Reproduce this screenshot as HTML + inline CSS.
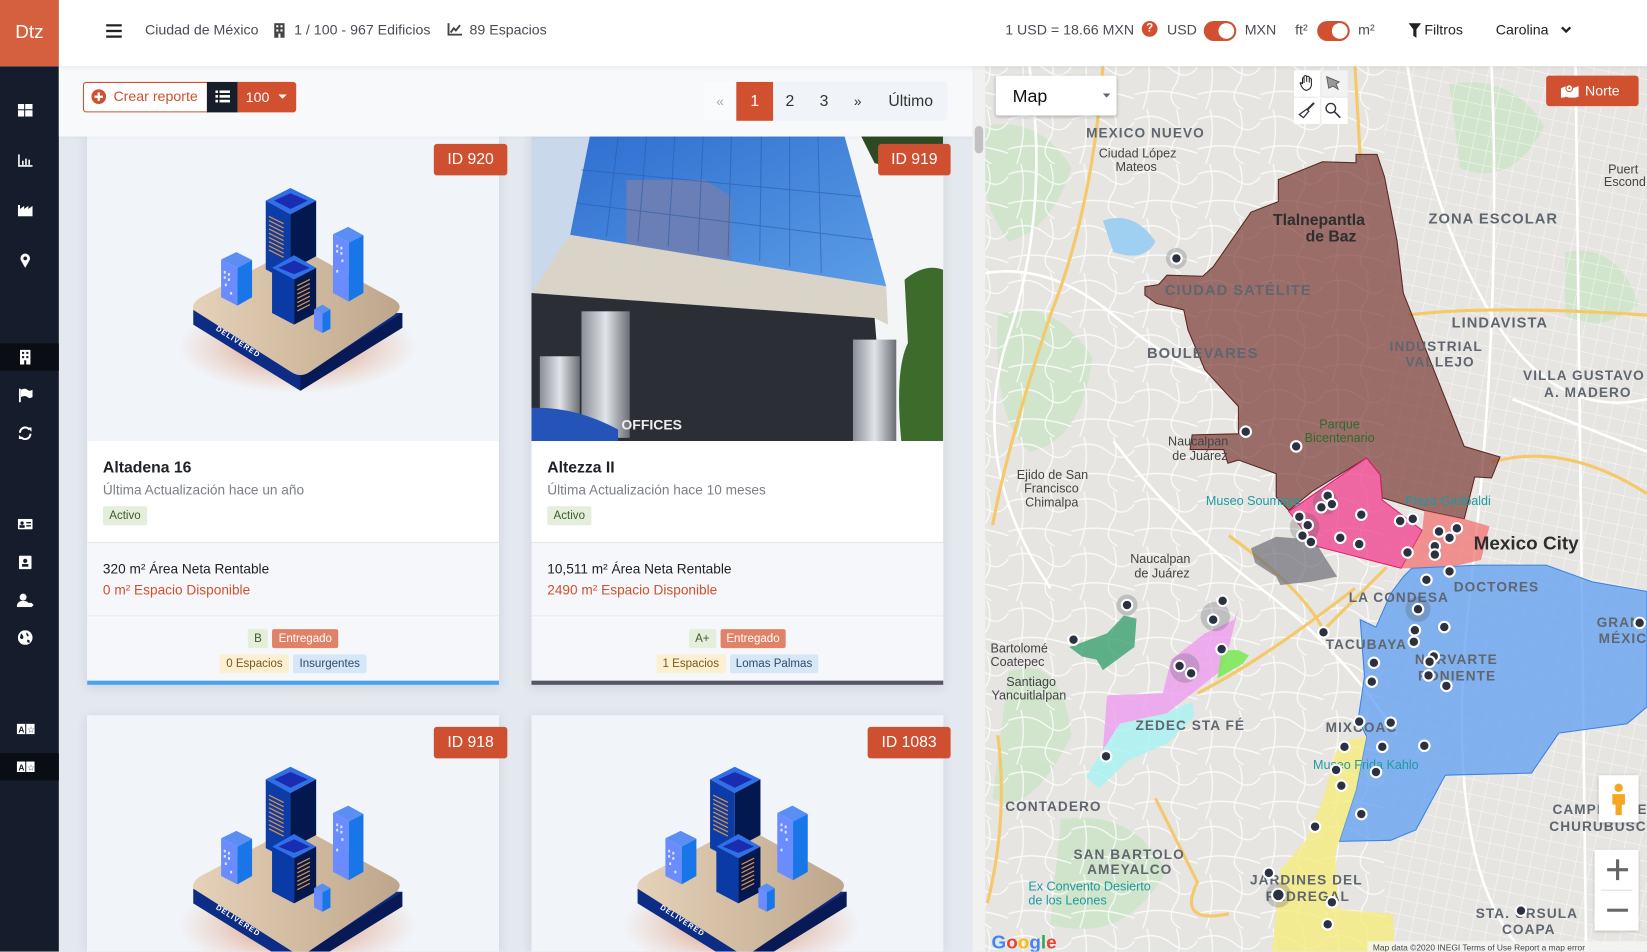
<!DOCTYPE html>
<html><head><meta charset="utf-8">
<style>
*{box-sizing:border-box;margin:0;padding:0}
html,body{width:1647px;height:951px;overflow:hidden;background:#e6eaf1;font-family:"Liberation Sans",sans-serif}
#wrap{position:absolute;left:0;top:0;width:1568px;height:906px;transform:scale(1.05038);transform-origin:0 0;overflow:hidden;background:#e4e8ef}
.abs{position:absolute}
#hdr{left:0;top:0;width:1568px;height:63px;background:#fff;box-shadow:0 1px 4px rgba(0,0,0,.08);z-index:5}
#logo{left:0;top:0;width:56px;height:63px;background:#d5603f;color:#fff;font-size:18px;line-height:60px;text-align:center}
.ht{font-size:13.5px;color:#4a4d55;top:21px;white-space:nowrap}
#side{left:0;top:63px;width:56px;height:843px;background:#151c2b}
#tool{left:56px;top:63px;width:870px;height:67px;background:#f8f9fb;z-index:3;box-shadow:0 1px 3px rgba(0,0,0,.05)}
.card{position:absolute;width:392px;background:#fff;box-shadow:0 2px 10px rgba(40,50,80,.12)}
.img{position:absolute;left:0;top:0;width:392px;height:290px;background:#f1f5fa;overflow:hidden}
.idb{position:absolute;height:30px;background:#cf5030;color:#fff;font-size:15px;line-height:30px;text-align:center;border-radius:3px;z-index:2}
.ttl{position:absolute;left:15px;font-size:15px;color:#1e2128;font-weight:bold}
.sub{position:absolute;left:15px;font-size:13px;color:#7b7f88}
.bdg{display:inline-block;font-size:11px;padding:0 6px;height:18px;line-height:18px;border-radius:2px;margin:0 2px}
.sec2{position:absolute;left:0;width:392px;height:71px;background:#f5f7fa;border-top:1px solid #e4e7ec;border-bottom:1px solid #e4e7ec}
.dot{fill:#2b3140;stroke:#fff;stroke-width:2}
.halo{fill:rgba(80,80,90,.25)}
.ml{font-family:"Liberation Sans",sans-serif;fill:#5f6670;font-weight:bold;letter-spacing:1px}
</style></head><body>
<svg width="0" height="0" style="position:absolute">
<defs>
<radialGradient id="glow" cx="50%" cy="50%" r="50%"><stop offset="0" stop-color="#c0582a" stop-opacity=".7"/><stop offset="1" stop-color="#e38a5a" stop-opacity="0"/></radialGradient>
<linearGradient id="plat" x1="0" y1="0" x2="1" y2="0"><stop offset="0" stop-color="#e5d2b8"/><stop offset="1" stop-color="#bea68c"/></linearGradient>
<g id="city">
<ellipse cx="200" cy="200" rx="115" ry="45" fill="url(#glow)"/>
<path d="M101,165 L101,179 L203,242 L300,182 L300,168 Z" fill="#0d2c86"/>
<path d="M203,228 L300,168 L300,182 L203,242 Z" fill="#081a55"/>
<path d="M101,165 Q99,158 110,152 L190,110 Q200,105 210,110 L292,155 Q303,162 292,170 L212,224 Q203,230 194,224 Z" fill="url(#plat)"/>
<text x="122" y="184" transform="rotate(33 122 184)" font-size="7" fill="#fff" font-weight="bold" letter-spacing="1">DELIVERED</text>
<path d="M127.5,117 L142,110 L157,117.5 L143,125 Z" fill="#5b8ef2"/><path d="M127.5,117 L143,125 L143,161 L127.5,153 Z" fill="#6a8cff"/><path d="M143,125 L157,117.5 L157,153 L143,161 Z" fill="#1976e8"/>
<g fill="#dce6ff"><rect x="130" y="128" width="2" height="2.5"/><rect x="134" y="130" width="2" height="2.5"/><rect x="130" y="133" width="2" height="2.5"/><rect x="134" y="135" width="2" height="2.5"/><rect x="131" y="140" width="2" height="2.5"/><rect x="136" y="148" width="2" height="2.5"/></g>
<path d="M234,93 L248.5,86 L263,94 L249,101 Z" fill="#5b8ef2"/><path d="M234,93 L249,101 L249,157 L234,149 Z" fill="#6a8cff"/><path d="M249,101 L263,94 L263,149 L249,157 Z" fill="#1976e8"/>
<g fill="#dce6ff"><rect x="237" y="103" width="2" height="2.5"/><rect x="241" y="105" width="2" height="2.5"/><rect x="237" y="108" width="2" height="2.5"/><rect x="241" y="110" width="2" height="2.5"/><rect x="242" y="117" width="2" height="2.5"/><rect x="237" y="127" width="2" height="2.5"/></g>
<path d="M170,61 L193.5,49 L218,61 L193.5,74 Z" fill="#2f6fe8"/><path d="M178,61 L193.5,54 L210,61 L193.5,69 Z" fill="#1a2db0"/><path d="M170,61 L193.5,74 L193.5,139 L170,126.5 Z" fill="#0c3ca8"/><path d="M193.5,74 L218,61 L218,114 L193.5,127 Z" fill="#03184f"/>
<g stroke="#d89040" stroke-width="1.2"><path d="M173,76 l14,7 M173,80 l14,7 M173,84 l14,7 M173,88 l14,7 M173,92 l14,7 M173,96 l14,7 M173,100 l14,7 M173,104 l14,7 M173,108 l14,7"/></g>
<path d="M176,125 L197,113 L218,125 L197,136 Z" fill="#2f6fe8"/><path d="M182,125 L197,118 L212,125 L197,131 Z" fill="#1a2db0"/><path d="M176,125 L197,136 L197,179 L176,168 Z" fill="#0a3aa6"/><path d="M197,136 L218,125 L218,168 L197,179 Z" fill="#03184f"/>
<g stroke="#d89040" stroke-width="1.2"><path d="M200,142 l12,-6 M200,146 l12,-6 M200,150 l12,-6 M200,154 l12,-6 M200,158 l12,-6 M200,162 l12,-6 M200,166 l12,-6"/></g>
<path d="M216,164.5 L224,160 L231.6,164.5 L224,168.6 Z" fill="#5b8ef2"/><path d="M216,164.5 L224,168.6 L224,187 L216,183 Z" fill="#6a8cff"/><path d="M224,168.6 L231.6,164.5 L231.6,183 L224,187 Z" fill="#1976e8"/>
</g>
<pattern id="roads" width="60" height="52" patternUnits="userSpaceOnUse"><path d="M0,10 Q20,2 35,14 T60,12 M12,0 Q18,25 8,52 M40,0 Q46,20 38,30 Q30,45 44,52 M0,38 Q25,30 60,42" stroke="#fff" stroke-width="1.2" fill="none" opacity=".85"/></pattern>
<pattern id="grid" width="14" height="14" patternUnits="userSpaceOnUse" patternTransform="rotate(12)"><path d="M0,0 H14 M0,0 V14" stroke="#fff" stroke-width="1.1" fill="none" opacity=".85"/></pattern>
</defs></svg>
<div id="wrap">
<div id="hdr" class="abs">
<div id="logo" class="abs">Dtz</div>
<svg class="abs" style="left:101px;top:23px" width="15" height="13"><rect y="0" width="15" height="2.2" fill="#222"/><rect y="5.4" width="15" height="2.2" fill="#222"/><rect y="10.8" width="15" height="2.2" fill="#222"/></svg>
<div class="abs ht" style="left:138px">Ciudad de México</div>
<svg class="abs" style="left:261px;top:22px" width="10" height="14"><rect width="10" height="14" fill="#444"/><g fill="#fff"><rect x="2" y="2" width="2" height="2"/><rect x="6" y="2" width="2" height="2"/><rect x="2" y="6" width="2" height="2"/><rect x="6" y="6" width="2" height="2"/><rect x="4" y="10" width="2" height="4"/></g></svg>
<div class="abs ht" style="left:280px">1 / 100 - 967 Edificios</div>
<svg class="abs" style="left:426px;top:22px" width="14" height="12"><path d="M1,0 V11 H14" stroke="#444" stroke-width="1.8" fill="none"/><path d="M3,9 L6,5 L8,7 L12,2" stroke="#444" stroke-width="1.8" fill="none"/></svg>
<div class="abs ht" style="left:447px">89 Espacios</div>
<div class="abs ht" style="left:957px">1 USD = 18.66 MXN</div>
<div class="abs" style="left:1087px;top:20px;width:15px;height:15px;border-radius:50%;background:#d0502f;color:#fff;font-size:11px;font-weight:bold;text-align:center;line-height:15px">?</div>
<div class="abs ht" style="left:1111px">USD</div>
<div class="abs" style="left:1146px;top:20px;width:31px;height:19px;border-radius:10px;background:#d0502f"><div style="position:absolute;right:2px;top:2px;width:15px;height:15px;border-radius:50%;background:#fff"></div></div>
<div class="abs ht" style="left:1185px">MXN</div>
<div class="abs ht" style="left:1233px">ft²</div>
<div class="abs" style="left:1254px;top:20px;width:31px;height:19px;border-radius:10px;background:#d0502f"><div style="position:absolute;right:2px;top:2px;width:15px;height:15px;border-radius:50%;background:#fff"></div></div>
<div class="abs ht" style="left:1293px">m²</div>
<svg class="abs" style="left:1341px;top:22px" width="12" height="14"><path d="M0,0 H12 L7.5,6 V14 L4.5,12 V6 Z" fill="#222"/></svg>
<div class="abs ht" style="left:1356px;color:#222">Filtros</div>
<div class="abs ht" style="left:1424px;color:#222">Carolina</div>
<svg class="abs" style="left:1486px;top:25px" width="10" height="8"><path d="M1,1 L5,5 L9,1" stroke="#222" stroke-width="2.2" fill="none"/></svg>
</div>
<div id="side" class="abs">
<svg class="abs" style="left:17px;top:36px" width="14" height="12"><g fill="#fff"><rect width="6" height="5"/><rect x="7" width="7" height="5"/><rect y="6" width="6" height="6"/><rect x="7" y="6" width="7" height="6"/></g></svg>
<svg class="abs" style="left:17px;top:84px" width="14" height="12"><path d="M1,0 V11 H14" stroke="#fff" stroke-width="1.5" fill="none"/><g fill="#fff"><rect x="4" y="6" width="1.5" height="4"/><rect x="7" y="4" width="1.5" height="6"/><rect x="10" y="5" width="1.5" height="5"/></g></svg>
<svg class="abs" style="left:17px;top:132px" width="14" height="11"><path d="M0,11 V0 H2 V4 L6,1 V4 L10,1 V4 L14,1 V11 Z" fill="#fff"/></svg>
<svg class="abs" style="left:19px;top:178px" width="10" height="14"><path d="M5,14 L1,7 A4.5,4.5 0 1 1 9,7 Z" fill="#fff"/><circle cx="5" cy="5" r="1.8" fill="#151c2b"/></svg>
<div class="abs" style="left:0;top:264px;width:56px;height:26px;background:#0a0d13"></div>
<svg class="abs" style="left:19px;top:270px" width="10" height="14"><rect width="10" height="14" fill="#fff"/><g fill="#151c2b"><rect x="2" y="2" width="2" height="2"/><rect x="6" y="2" width="2" height="2"/><rect x="2" y="6" width="2" height="2"/><rect x="6" y="6" width="2" height="2"/><rect x="4" y="10" width="2" height="4"/></g></svg>
<svg class="abs" style="left:18px;top:307px" width="13" height="13"><rect width="1.8" height="13" fill="#fff"/><path d="M2,1 Q6,-1 8,1 Q10,3 13,1 V8 Q10,10 8,8 Q6,6 2,8 Z" fill="#fff"/></svg>
<svg class="abs" style="left:17px;top:343px" width="14" height="13"><path d="M2,6 A5,5 0 0 1 11,3 M12,7 A5,5 0 0 1 3,10" stroke="#fff" stroke-width="2" fill="none"/><path d="M9,1 L13,1 L13,5 Z M5,12 L1,12 L1,8 Z" fill="#fff"/></svg>
<svg class="abs" style="left:17px;top:431px" width="14" height="10"><rect width="14" height="10" rx="1" fill="#fff"/><circle cx="4" cy="4" r="1.6" fill="#151c2b"/><rect x="1.5" y="6" width="5" height="2.5" fill="#151c2b"/><rect x="8" y="3" width="4.5" height="1.3" fill="#151c2b"/><rect x="8" y="6" width="4.5" height="1.3" fill="#151c2b"/></svg>
<svg class="abs" style="left:18px;top:466px" width="12" height="13"><rect width="12" height="13" rx="1" fill="#fff"/><circle cx="6" cy="5" r="2" fill="#151c2b"/><rect x="3" y="8" width="6" height="2.5" fill="#151c2b"/></svg>
<svg class="abs" style="left:16px;top:502px" width="16" height="13"><circle cx="6" cy="3.5" r="3.3" fill="#fff"/><path d="M0,13 Q0,7 6,7 Q10,7 11,9 L11,13 Z" fill="#fff"/><path d="M10,9 H14 L16,11 L14,13 H10 Z" fill="#fff"/></svg>
<svg class="abs" style="left:17px;top:537px" width="14" height="14"><circle cx="7" cy="7" r="7" fill="#fff"/><path d="M3,3 Q6,5 5,8 Q3,9 2,7 Z M8,2 Q11,4 10,6 Q8,6 8,2 Z M9,9 Q12,9 11,12 Q8,12 9,9 Z" fill="#151c2b"/></svg>
<svg class="abs" style="left:16px;top:626px" width="17" height="10"><rect width="17" height="10" fill="#fff"/><rect x="8" y="0" width="1" height="10" fill="#151c2b"/><text x="1.5" y="8.5" font-size="8" font-weight="bold" fill="#151c2b">A</text><text x="10" y="8.5" font-size="8" fill="#151c2b">☆</text></svg>
<div class="abs" style="left:0;top:654px;width:56px;height:26px;background:#0a0d13"></div>
<svg class="abs" style="left:16px;top:662px" width="17" height="10"><rect width="17" height="10" fill="#fff"/><rect x="8" y="0" width="1" height="10" fill="#151c2b"/><text x="1.5" y="8.5" font-size="8" font-weight="bold" fill="#151c2b">A</text><text x="10" y="8.5" font-size="8" fill="#151c2b">☆</text></svg>
</div>
<div id="tool" class="abs">
<div class="abs" style="left:23px;top:15px;width:119px;height:29px;border:1px solid #d0502f;border-radius:3px 0 0 3px;background:#fff"></div>
<svg class="abs" style="left:31px;top:22px" width="14" height="14"><circle cx="7" cy="7" r="7" fill="#d0502f"/><rect x="3" y="6" width="8" height="2.2" fill="#fff"/><rect x="5.9" y="3" width="2.2" height="8" fill="#fff"/></svg>
<div class="abs" style="left:52px;top:21px;font-size:13.5px;color:#d0502f">Crear reporte</div>
<div class="abs" style="left:141px;top:15px;width:30px;height:29px;background:#161d2b"></div>
<svg class="abs" style="left:149px;top:23px" width="14" height="12"><g fill="#fff"><rect width="2.5" height="2.5"/><rect y="4.5" width="2.5" height="2.5"/><rect y="9" width="2.5" height="2.5"/><rect x="4" width="10" height="2.5"/><rect x="4" y="4.5" width="10" height="2.5"/><rect x="4" y="9" width="10" height="2.5"/></g></svg>
<div class="abs" style="left:170px;top:15px;width:56px;height:29px;background:#d0502f;border-radius:0 3px 3px 0;color:#fff;font-size:13.5px;line-height:29px;padding-left:8px">100</div>
<svg class="abs" style="left:209px;top:27px" width="8" height="5"><path d="M0,0 H8 L4,4 Z" fill="#fff"/></svg>
<div class="abs" style="left:614px;top:15px;width:232px;height:37px;background:#f0f3f7;border-radius:4px"></div>
<div class="abs" style="left:614px;top:15px;width:31px;height:37px;background:#fafbfc;color:#aaa;font-size:13px;line-height:37px;text-align:center">«</div>
<div class="abs" style="left:645px;top:15px;width:35px;height:37px;background:#d0502f;color:#fff;font-size:15px;line-height:37px;text-align:center">1</div>
<div class="abs" style="left:680px;top:15px;width:32px;height:37px;color:#333;font-size:15px;line-height:37px;text-align:center">2</div>
<div class="abs" style="left:712px;top:15px;width:33px;height:37px;color:#333;font-size:15px;line-height:37px;text-align:center">3</div>
<div class="abs" style="left:745px;top:15px;width:31px;height:37px;color:#333;font-size:13px;line-height:37px;text-align:center">»</div>
<div class="abs" style="left:776px;top:15px;width:70px;height:37px;color:#333;font-size:15px;line-height:37px;text-align:center">Último</div>
</div>
<div class="abs" style="left:926px;top:63px;width:12px;height:843px;background:#f1f1f1"></div>
<div class="abs" style="left:928px;top:120px;width:8px;height:26px;background:#c1c1c1;border-radius:4px"></div>
<div class="card" style="left:83px;top:126px;height:526px">
<div class="img" style="top:4px"><svg width="392" height="290" viewBox="0 0 392 290"><use href="#city"/></svg></div>
<div class="ttl" style="top:311px">Altadena 16</div>
<div class="sub" style="top:333px">Última Actualización hace un año</div>
<div class="abs" style="left:15px;top:355px"><span class="bdg" style="background:#e3eedb;color:#3d5a2b;margin:0">Activo</span></div>
<div class="sec2" style="top:390px"></div>
<div class="abs" style="left:15px;top:408px;font-size:13px;color:#222">320 m² Área Neta Rentable</div>
<div class="abs" style="left:15px;top:428px;font-size:13px;color:#d0502f">0 m² Espacio Disponible</div>
<div class="abs" style="left:0;top:462px;width:392px;height:60px;background:#f5f7fa"></div>
<div class="abs" style="left:0;top:472px;width:392px;text-align:center"><span class="bdg" style="background:#e4eedb;color:#3d5a2b">B</span><span class="bdg" style="background:#df8268;color:#fff">Entregado</span></div>
<div class="abs" style="left:0;top:496px;width:392px;text-align:center"><span class="bdg" style="background:#fdefd2;color:#7a5a1a">0 Espacios</span><span class="bdg" style="background:#d6e7f8;color:#2f4c6c">Insurgentes</span></div>
<div class="abs" style="left:0;top:522px;width:392px;height:4px;background:#4aa3f1"></div>
</div>
<div class="idb" style="left:413px;top:137px;width:70px">ID 920</div>
<div class="card" style="left:506px;top:126px;height:526px">
<div class="img" style="top:4px"><svg width="392" height="290" viewBox="0 0 1236 915" preserveAspectRatio="none">
<rect width="1236" height="915" fill="#f3f5f7"/>
<path d="M0,0 H175 L115,300 L0,470 Z" fill="#c9d8ea"/>
<defs><linearGradient id="gl" x1="0" y1="0" x2="1" y2="1"><stop offset="0" stop-color="#2f6fd0"/><stop offset="1" stop-color="#5c9de6"/></linearGradient><linearGradient id="col" x1="0" x2="1"><stop offset="0" stop-color="#8a8f96"/><stop offset=".5" stop-color="#e1e4e8"/><stop offset="1" stop-color="#6a6e74"/></linearGradient></defs>
<path d="M175,0 H940 L1065,450 L115,300 Z" fill="url(#gl)"/>
<path d="M285,130 H520 L600,180 V370 L285,330 Z" fill="#6a7fb5"/>
<g stroke="#2a5aa8" stroke-width="3" opacity=".6"><path d="M260,0 L225,300 M345,0 L320,315 M430,0 L410,330 M515,0 L500,345 M600,0 L590,360 M690,0 L685,375 M775,0 L775,390 M860,0 L870,410 M150,100 L990,180 M135,200 L1025,310"/></g>
<path d="M115,295 L1065,450 L1070,565 L1030,545 L0,470 Z" fill="#d9d3c8"/>
<path d="M0,470 L1030,545 L1060,915 H0 Z" fill="#2b2e35"/>
<rect x="150" y="525" width="145" height="380" fill="url(#col)"/>
<rect x="25" y="660" width="120" height="250" fill="url(#col)"/>
<rect x="965" y="610" width="130" height="305" fill="url(#col)"/>
<path d="M0,815 Q130,810 260,880 V915 H0 Z" fill="#2454b8"/>
<text x="270" y="880" font-size="42" font-weight="bold" fill="#eee" font-family="Liberation Sans,sans-serif">OFFICES</text>
<path d="M1120,430 Q1180,380 1236,400 V915 H1110 Q1090,700 1130,620 Z" fill="#3d6b2c"/>
<path d="M990,0 H1236 V70 Q1100,100 1030,80 Z" fill="#2e4a24"/>
</svg></div>
<div class="ttl" style="top:311px">Altezza II</div>
<div class="sub" style="top:333px">Última Actualización hace 10 meses</div>
<div class="abs" style="left:15px;top:355px"><span class="bdg" style="background:#e3eedb;color:#3d5a2b;margin:0">Activo</span></div>
<div class="sec2" style="top:390px"></div>
<div class="abs" style="left:15px;top:408px;font-size:13px;color:#222">10,511 m² Área Neta Rentable</div>
<div class="abs" style="left:15px;top:428px;font-size:13px;color:#d0502f">2490 m² Espacio Disponible</div>
<div class="abs" style="left:0;top:462px;width:392px;height:60px;background:#f5f7fa"></div>
<div class="abs" style="left:0;top:472px;width:392px;text-align:center"><span class="bdg" style="background:#e4eedb;color:#3d5a2b">A+</span><span class="bdg" style="background:#df8268;color:#fff">Entregado</span></div>
<div class="abs" style="left:0;top:496px;width:392px;text-align:center"><span class="bdg" style="background:#fdefd2;color:#7a5a1a">1 Espacios</span><span class="bdg" style="background:#d6e7f8;color:#2f4c6c">Lomas Palmas</span></div>
<div class="abs" style="left:0;top:522px;width:392px;height:4px;background:#565667"></div>
</div>
<div class="idb" style="left:836px;top:137px;width:69px">ID 919</div>
<div class="card" style="left:83px;top:681px;height:225px"><div class="img" style="height:225px"><svg width="392" height="290" viewBox="0 0 392 290"><use href="#city"/></svg></div></div>
<div class="idb" style="left:413px;top:692px;width:70px">ID 918</div>
<div class="card" style="left:506px;top:681px;height:225px"><div class="img" style="height:225px"><svg width="392" height="290" viewBox="0 0 392 290"><use href="#city"/></svg></div></div>
<div class="idb" style="left:826px;top:692px;width:79px">ID 1083</div>
<svg class="abs" style="left:938px;top:63px" width="630" height="843" viewBox="938 63 630 843">
<rect x="938" y="63" width="630" height="843" fill="#e6e5e1"/>
<g fill="#c9e3c4" opacity=".75">
<path d="M938,120 Q990,110 1020,160 Q1000,220 960,230 Q940,200 938,180 Z"/>
<path d="M950,300 Q1000,280 1040,340 Q1030,420 980,430 Q945,400 950,300 Z"/>
<path d="M960,640 Q1010,620 1020,700 Q980,780 945,760 Z"/>
<path d="M1010,780 Q1080,770 1110,830 Q1070,900 1000,880 Z"/>
<path d="M1380,80 Q1440,70 1470,120 Q1440,180 1390,160 Z"/>
<path d="M1490,240 Q1540,230 1560,290 Q1520,320 1490,300 Z"/>
</g>
<rect x="938" y="63" width="380" height="843" fill="url(#roads)"/>
<rect x="1318" y="63" width="250" height="843" fill="url(#grid)" opacity=".8"/>
<g stroke="#fff" stroke-width="2.5" fill="none">
<path d="M938,260 Q1000,250 1060,300 T1160,360"/><path d="M980,63 Q1000,200 960,320 T1000,560"/><path d="M1060,420 Q1120,500 1200,560 T1330,700"/>
<path d="M1420,63 Q1430,300 1400,560 T1450,906"/><path d="M1340,63 Q1360,200 1420,300 T1568,380"/>
<path d="M1500,63 L1510,906"/><path d="M1440,380 L1568,430"/>
</g>
<g stroke="#f5c86a" stroke-width="3" fill="none">
<path d="M1050,63 Q1040,200 1000,300 Q960,420 945,500"/><path d="M1170,510 Q1240,560 1260,600 L1320,540"/><path d="M1140,660 Q1200,630 1290,560"/>
<path d="M1340,300 Q1420,290 1568,300"/><path d="M1420,440 Q1490,420 1568,470"/><path d="M1100,760 Q1120,800 1140,840 Q1120,880 1170,870"/><path d="M950,700 Q960,780 940,860"/>
<path d="M1290,63 L1295,150"/>
</g>
<path d="M1050,210 Q1080,200 1100,230 Q1090,250 1060,240 Z" fill="#9fd0f2"/>
<path d="M1259,154 L1291,155 L1291,147 L1311,147 L1318,168 L1330,229 L1336,279 L1394,425 L1428,435 L1420,455 L1404,454 L1394,494 L1356,486 L1316,474 L1314,452 L1301,436 L1249,468 L1227,486 L1215,473 L1215,451 L1179,438 L1169,441 L1165,428 L1133,428 L1135,414 L1179,413 L1179,387 L1147,352 L1131,314 L1127,295 L1101,289 L1090,281 L1090,273 L1103,271 L1111,262 L1145,263 L1155,254 L1191,202 L1217,192 L1217,171 Z" fill="#7a3a36" fill-opacity=".7" stroke="#5a2622" stroke-width="1"/>
<path d="M1227,487 L1301,436 L1314,452 L1316,476 L1354,505 L1334,541 L1253,520 Z" fill="#f03c8c" fill-opacity=".75" stroke="#e0206e" stroke-width="1"/>
<path d="M1354,505 L1356,486 L1394,494 L1418,501 L1410,533 L1380,540 L1334,541 Z" fill="#f26b6b" fill-opacity=".7"/>
<path d="M1336,549 L1344,541 L1408,538 L1472,538 L1516,554 L1568,563 L1568,673 L1549,689 L1484,698 L1458,736 L1376,738 L1370,749 L1348,790 L1324,800 L1275,801 L1291,752 L1301,701 L1293,685 L1299,644 L1295,590 L1310,597 L1324,565 Z" fill="#5d9ef0" fill-opacity=".75" stroke="#3b82e0" stroke-width="1"/>
<path d="M1301,701 L1291,752 L1275,801 L1271,812 L1275,866 L1326,870 L1328,906 L1211,906 L1219,828 L1243,800 L1259,762 L1271,717 L1283,705 Z" fill="#f6ec7e" fill-opacity=".8"/>
<path d="M1191,522 L1215,511 L1251,514 L1259,527 L1273,549 L1247,554 L1219,557 L1215,549 L1195,536 Z" fill="#6e6e78" fill-opacity=".7"/>
<path d="M1179,579 L1175,590 L1147,603 L1115,628 L1107,660 L1054,662 L1050,714 L1066,689 L1111,679 L1139,657 L1163,638 L1171,612 Z" fill="#ee9cf0" fill-opacity=".8"/>
<path d="M1050,714 L1034,739 L1046,751 L1074,724 L1111,708 L1137,682 L1135,668 L1111,679 L1066,689 Z" fill="#a6f2f2" fill-opacity=".8"/>
<path d="M1018,616 L1054,603 L1070,586 L1082,589 L1080,616 L1050,638 L1044,628 L1030,625 Z" fill="#2f9c6a" fill-opacity=".75"/>
<path d="M1163,619 L1179,619 L1189,624 L1183,632 L1159,646 Z" fill="#7ee85a" fill-opacity=".9"/>
<g class="ml">
<text x="1034" y="131" font-size="13">MEXICO NUEVO</text>
<text x="1212" y="214" font-size="15" style="fill:#2e2e2e;letter-spacing:0">Tlalnepantla</text>
<text x="1243" y="230" font-size="15" style="fill:#2e2e2e;letter-spacing:0">de Baz</text>
<text x="1360" y="213" font-size="14">ZONA ESCOLAR</text>
<text x="1109" y="281" font-size="14">CIUDAD SATÉLITE</text>
<text x="1092" y="341" font-size="14">BOULEVARES</text>
<text x="1382" y="312" font-size="14">LINDAVISTA</text>
<text x="1323" y="334" font-size="13">INDUSTRIAL</text>
<text x="1338" y="349" font-size="13">VALLEJO</text>
<text x="1450" y="362" font-size="13">VILLA GUSTAVO</text>
<text x="1470" y="378" font-size="13">A. MADERO</text>
<text x="1403" y="523" font-size="18" style="fill:#2e2e2e;letter-spacing:0">Mexico City</text>
<text x="1384" y="563" font-size="13">DOCTORES</text>
<text x="1284" y="573" font-size="13">LA CONDESA</text>
<text x="1262" y="618" font-size="13">TACUBAYA</text>
<text x="1347" y="632" font-size="13">NARVARTE</text>
<text x="1350" y="648" font-size="13">PONIENTE</text>
<text x="1081" y="695" font-size="13">ZEDEC STA FÉ</text>
<text x="1262" y="697" font-size="13">MIXCOAC</text>
<text x="957" y="772" font-size="13">CONTADERO</text>
<text x="1022" y="818" font-size="13">SAN BARTOLO</text>
<text x="1035" y="832" font-size="13">AMEYALCO</text>
<text x="1190" y="842" font-size="13">JARDINES DEL</text>
<text x="1205" y="858" font-size="13">PEDREGAL</text>
<text x="1478" y="775" font-size="13">CAMPESTRE</text>
<text x="1475" y="791" font-size="13">CHURUBUSCO</text>
<text x="1405" y="874" font-size="13">STA. ÚRSULA</text>
<text x="1430" y="889" font-size="13">COAPA</text>
<text x="1520" y="597" font-size="13">GRAN</text><text x="1522" y="612" font-size="13">MÉXIC</text>
</g>
<g font-family="Liberation Sans,sans-serif" font-size="12" fill="#444">
<text x="1046" y="150">Ciudad López</text><text x="1062" y="163">Mateos</text>
<text x="1256" y="408" style="fill:#2f6a2f">Parque</text><text x="1242" y="421" style="fill:#2f6a2f">Bicentenario</text>
<text x="1112" y="424">Naucalpan</text><text x="1116" y="438">de Juárez</text>
<text x="968" y="456">Ejido de San</text><text x="975" y="469">Francisco</text><text x="976" y="482">Chimalpa</text>
<text x="1076" y="536">Naucalpan</text><text x="1080" y="550">de Juárez</text>
<text x="943" y="621">Bartolomé</text><text x="943" y="634">Coatepec</text>
<text x="958" y="653">Santiago</text><text x="944" y="666">Yancuitlalpan</text>
<text x="1148" y="481" style="fill:#1d9aa0">Museo Soumaya</text>
<text x="1338" y="481" style="fill:#1d9aa0">Plaza Garibaldi</text>
<text x="1250" y="732" style="fill:#1d9aa0">Museo Frida Kahlo</text>
<text x="979" y="848" style="fill:#1d9aa0">Ex Convento Desierto</text><text x="979" y="861" style="fill:#1d9aa0">de los Leones</text>
<text x="1531" y="165">Puert</text><text x="1527" y="177">Escond</text>
</g>
<g>
<circle class="halo" cx="1120" cy="246" r="10"/><circle class="halo" cx="1073" cy="576" r="10"/><circle class="halo" cx="1157" cy="587" r="14"/><circle class="halo" cx="1128" cy="636" r="14"/><circle class="halo" cx="1217" cy="852" r="12"/><circle class="halo" cx="1350" cy="580" r="12"/><circle class="halo" cx="1242" cy="502" r="14"/><circle class="halo" cx="1262" cy="478" r="12"/>
<circle class="dot" cx="1120" cy="246" r="5"/><circle class="dot" cx="1186" cy="411" r="5"/><circle class="dot" cx="1234" cy="425" r="5"/>
<circle class="dot" cx="1264" cy="472" r="5"/><circle class="dot" cx="1258" cy="483" r="5"/><circle class="dot" cx="1268" cy="480" r="5"/><circle class="dot" cx="1296" cy="490" r="5"/><circle class="dot" cx="1333" cy="496" r="5"/><circle class="dot" cx="1345" cy="494" r="5"/>
<circle class="dot" cx="1237" cy="492" r="5"/><circle class="dot" cx="1245" cy="500" r="5"/><circle class="dot" cx="1240" cy="510" r="5"/><circle class="dot" cx="1248" cy="516" r="5"/><circle class="dot" cx="1276" cy="512" r="5"/><circle class="dot" cx="1294" cy="518" r="5"/><circle class="dot" cx="1340" cy="526" r="5"/>
<circle class="dot" cx="1370" cy="506" r="5"/><circle class="dot" cx="1380" cy="512" r="5"/><circle class="dot" cx="1387" cy="503" r="5"/><circle class="dot" cx="1366" cy="520" r="5"/><circle class="dot" cx="1366" cy="528" r="5"/><circle class="dot" cx="1358" cy="552" r="5"/><circle class="dot" cx="1380" cy="544" r="5"/>
<circle class="dot" cx="1350" cy="580" r="5"/><circle class="dot" cx="1347" cy="600" r="5"/><circle class="dot" cx="1375" cy="597" r="5"/><circle class="dot" cx="1346" cy="611" r="5"/><circle class="dot" cx="1365" cy="625" r="5"/><circle class="dot" cx="1360" cy="643" r="5"/><circle class="dot" cx="1377" cy="653" r="5"/>
<circle class="dot" cx="1308" cy="631" r="5"/><circle class="dot" cx="1306" cy="649" r="5"/><circle class="dot" cx="1361" cy="630" r="5"/><circle class="dot" cx="1294" cy="687" r="5"/><circle class="dot" cx="1324" cy="688" r="5"/><circle class="dot" cx="1280" cy="711" r="5"/><circle class="dot" cx="1316" cy="711" r="5"/><circle class="dot" cx="1310" cy="735" r="5"/><circle class="dot" cx="1356" cy="710" r="5"/>
<circle class="dot" cx="1272" cy="733" r="5"/><circle class="dot" cx="1277" cy="748" r="5"/><circle class="dot" cx="1296" cy="775" r="5"/><circle class="dot" cx="1252" cy="787" r="5"/><circle class="dot" cx="1260" cy="602" r="5"/>
<circle class="dot" cx="1073" cy="576" r="5"/><circle class="dot" cx="1022" cy="609" r="5"/><circle class="dot" cx="1164" cy="572" r="5"/><circle class="dot" cx="1155" cy="590" r="5"/><circle class="dot" cx="1163" cy="618" r="5"/><circle class="dot" cx="1123" cy="634" r="5"/><circle class="dot" cx="1134" cy="641" r="5"/><circle class="dot" cx="1053" cy="720" r="5"/>
<circle class="dot" cx="1208" cy="831" r="5"/><circle class="dot" cx="1217" cy="852" r="6"/><circle class="dot" cx="1268" cy="859" r="5"/><circle class="dot" cx="1264" cy="880" r="5"/><circle class="dot" cx="1448" cy="867" r="5"/><circle class="dot" cx="1561" cy="593" r="5"/>
</g>
<text x="944" y="903" font-size="18" font-family="Liberation Sans,sans-serif" font-weight="bold" fill="#4285f4">G<tspan fill="#ea4335">o</tspan><tspan fill="#fbbc05">o</tspan><tspan fill="#4285f4">g</tspan><tspan fill="#34a853">l</tspan><tspan fill="#ea4335">e</tspan></text>
<rect x="1302" y="896" width="266" height="10" fill="#f5f5f5" opacity=".8"/>
<text x="1307" y="905" font-size="8" fill="#444" font-family="Liberation Sans,sans-serif">Map data ©2020 INEGI    Terms of Use    Report a map error</text>
</svg>
<div class="abs" style="left:948px;top:72px;width:115px;height:38px;background:#fff;border-radius:2px;box-shadow:0 1px 3px rgba(0,0,0,.25)"></div>
<div class="abs" style="left:964px;top:82px;font-size:17px;color:#111">Map</div>
<svg class="abs" style="left:1050px;top:89px" width="7" height="4"><path d="M0,0 H7 L3.5,4 Z" fill="#666"/></svg>
<div class="abs" style="left:1232px;top:67px;width:25px;height:25px;background:#fff"></div>
<div class="abs" style="left:1258px;top:67px;width:25px;height:25px;background:#f2f2f2"></div>
<div class="abs" style="left:1232px;top:93px;width:25px;height:25px;background:#fff"></div>
<div class="abs" style="left:1258px;top:93px;width:25px;height:25px;background:#fff"></div>
<svg class="abs" style="left:1237px;top:71px" width="14" height="16"><path d="M3,9 V4 Q3,2.5 4.5,3 V8 M4.5,3 V1.5 Q6,0.5 7,1.5 V7 M7,2 Q8.5,1 9.5,2.5 V7.5 M9.5,3.5 Q11,3 11.5,4.5 V10 Q11,14 7,15 Q4,15 2,11 L0.8,8 Q1.5,7 3,9" stroke="#222" stroke-width="1" fill="#fff"/></svg>
<svg class="abs" style="left:1262px;top:72px" width="14" height="14"><path d="M1,1 L13,6 L10,8 L12,13 L7,10 L3,12 Z" fill="#999" stroke="#555" stroke-width=".8"/></svg>
<svg class="abs" style="left:1236px;top:97px" width="16" height="16"><path d="M15,1 L8,8" stroke="#333" stroke-width="2"/><path d="M8,7 L10,9 L5,15 L1,12 Z" fill="#fff" stroke="#333" stroke-width="1.2"/></svg>
<svg class="abs" style="left:1261px;top:97px" width="16" height="16"><circle cx="6" cy="6" r="4.5" stroke="#333" stroke-width="1.3" fill="none"/><path d="M9.5,9.5 L15,15" stroke="#333" stroke-width="1.5"/></svg>
<div class="abs" style="left:1472px;top:72px;width:88px;height:29px;background:#d0502f;border-radius:3px;color:#fff;font-size:13.5px;line-height:29px;padding-left:37px">Norte</div>
<svg class="abs" style="left:1486px;top:79px" width="17" height="14"><path d="M0,5 L5,3 L11,5 L17,3 V13 L11,15 L5,13 L0,15 Z" fill="#fff"/><circle cx="8" cy="5" r="3.2" fill="#fff" stroke="#d0502f" stroke-width="1"/><circle cx="8" cy="5" r="1" fill="#d0502f"/></svg>
<div class="abs" style="left:1522px;top:738px;width:38px;height:45px;background:#fff;box-shadow:0 1px 3px rgba(0,0,0,.25)"></div>
<svg class="abs" style="left:1531px;top:745px" width="20" height="32"><circle cx="10" cy="5" r="4" fill="#f5a623"/><path d="M4,11 H16 V21 H13 V31 H7 V21 H4 Z" fill="#f5a623"/></svg>
<div class="abs" style="left:1518px;top:809px;width:42px;height:77px;background:#fff;box-shadow:0 1px 3px rgba(0,0,0,.25)"></div>
<div class="abs" style="left:1524px;top:847px;width:30px;height:1px;background:#e0e0e0"></div>
<svg class="abs" style="left:1530px;top:818px" width="20" height="20"><rect x="0" y="8.5" width="20" height="3" fill="#666"/><rect x="8.5" y="0" width="3" height="20" fill="#666"/></svg>
<svg class="abs" style="left:1530px;top:865px" width="20" height="4"><rect width="20" height="3" fill="#666"/></svg>
</div>
</body></html>
